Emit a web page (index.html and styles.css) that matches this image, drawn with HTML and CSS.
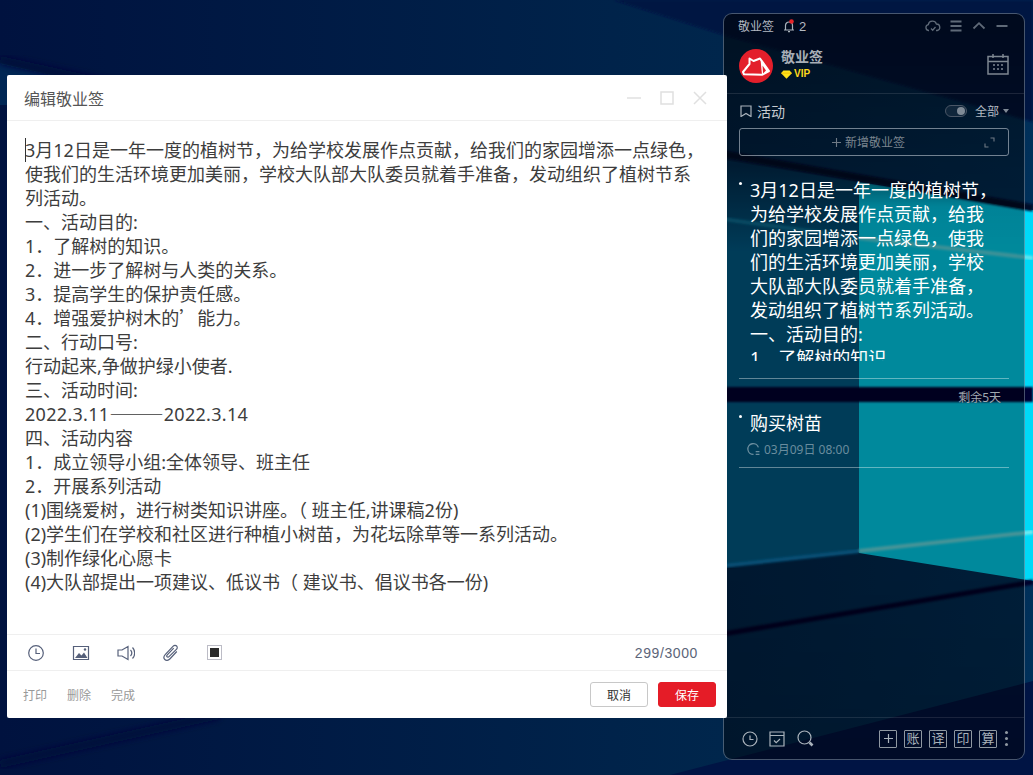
FILE: index.html
```html
<!DOCTYPE html>
<html lang="zh-CN">
<head>
<meta charset="utf-8">
<title>敬业签</title>
<link rel="stylesheet" href="styles.css">
</head>
<body>
<div class="desktop">
  <svg class="wallpaper" viewBox="0 0 1033 775" width="1033" height="775" aria-hidden="true">
    <defs>
      <linearGradient id="base" x1="0" y1="0" x2="1" y2="0"><stop offset="0" stop-color="#00123f"/><stop offset="0.7" stop-color="#00264c"/><stop offset="1" stop-color="#00305a"/></linearGradient>
      <linearGradient id="paneL" x1="0" y1="165" x2="0" y2="250" gradientUnits="userSpaceOnUse"><stop offset="0" stop-color="#003056"/><stop offset="1" stop-color="#005f8c"/></linearGradient>
      <linearGradient id="paneR" x1="0" y1="180" x2="0" y2="240" gradientUnits="userSpaceOnUse"><stop offset="0" stop-color="#0090b0"/><stop offset="0.45" stop-color="#00d8fa"/><stop offset="1" stop-color="#00daf8"/></linearGradient>
      <filter id="soft"><feGaussianBlur stdDeviation="1"/></filter>
      <filter id="softer"><feGaussianBlur stdDeviation="3"/></filter>
    </defs>
    <rect width="1033" height="775" fill="url(#base)"/>
    <polygon points="614,0 1033,0 1033,122 724,35" fill="#001243" filter="url(#soft)"/>
    <polygon points="0,63 180,105 0,105" fill="#002654"/>
    <path d="M0,60 L220,108" stroke="#000a3a" stroke-width="8" filter="url(#softer)"/>
    <polygon points="723,160 859,182 859,552 723,566" fill="url(#paneL)"/>
    <polygon points="859,182 1033,210 1033,581 859,553" fill="url(#paneR)"/>
    <path d="M723,154 L1033,208" stroke="#00082c" stroke-width="7" filter="url(#soft)"/>
    <path d="M723,219 L859,238" stroke="#0a78a0" stroke-width="4" filter="url(#soft)"/>
    <path d="M859,238 L1033,258" stroke="#60e6f0" stroke-width="4" filter="url(#soft)"/>
    <path d="M723,566 L859,551" stroke="#0a7cb8" stroke-width="4" filter="url(#soft)"/>
    <path d="M859,551 L1033,532" stroke="#70eaf0" stroke-width="4" filter="url(#soft)"/>
    <rect x="700" y="387" width="333" height="15" fill="#000030" filter="url(#soft)"/>
    <path d="M1033,582 L723,634" stroke="#00002c" stroke-width="5" filter="url(#soft)"/>
    <polygon points="1033,681 1033,775 670,775" fill="#001444"/>
    <path d="M0,764 L219,715" stroke="#000a3a" stroke-width="8" filter="url(#softer)"/>
  </svg>

  <aside class="panel">
    <div class="titlebar">
      <div class="titlebar-left">
        <span class="app-name">敬业签</span>
        <svg class="ic-bell" viewBox="0 0 14 14"><path class="s-light" d="M2 11h10M3.500 11V6.500a3.500 3.500 0 0 1 7 0V11M6 12.600h2"/><circle cx="9.500" cy="2.500" r="2.300" fill="#e5252a"/></svg>
        <span class="bell-count">2</span>
      </div>
      <div class="titlebar-right">
        <svg class="ic-win" viewBox="0 0 16 12"><path class="s-dim" d="M4 10.500H3.500A3 3 0 0 1 3.300 4.600 4.200 4.200 0 0 1 11.400 4a3.300 3.300 0 0 1 .9 6.500H11M6 8.500l1.700 1.700L10.500 7"/></svg>
        <svg class="ic-win" viewBox="0 0 16 12"><path class="s-dim w2" d="M2.500 1.500h11M2.500 6h11M2.500 10.500h11"/></svg>
        <svg class="ic-win" viewBox="0 0 16 12"><path class="s-dim w2" d="M2.500 8.500L8 3.200l5.500 5.300"/></svg>
        <svg class="ic-win" viewBox="0 0 16 12"><path class="s-dim w2" d="M2.500 6h11"/></svg>
      </div>
    </div>

    <div class="profile">
      <svg class="avatar" viewBox="0 0 34 34">
        <circle cx="17" cy="17" r="17" fill="#e31f2b"/>
        <path d="M4 23L10.500 15V9.500l4 2.500 6.500-2.500L30 22l-7 3.800L5 25.300z" fill="none" stroke="#fff" stroke-width="2" stroke-linejoin="round"/>
        <path d="M21.500 10L30 22l-7 3.800-.6-6z" fill="#fff"/>
        <path d="M23.500 16.500L27 21.500 24 24.500z" fill="#e31f2b"/>
      </svg>
      <div class="profile-info">
        <div class="profile-name">敬业签</div>
        <div class="vip">
          <svg class="ic-gem" viewBox="0 0 12 10"><path d="M2.500 0.500h7L12 3.500 6 9.800 0 3.500z" fill="#ffe21a"/><path d="M0 3.500h12" stroke="#f0b400" stroke-width=".8"/></svg>
          <span>VIP</span>
        </div>
      </div>
      <svg class="ic-cal" viewBox="0 0 22 22">
        <path class="s-cal" d="M1 3.500h20v17.500H1zM1 8.500h20M6 1v4M16 1v4"/>
        <path class="s-cal" d="M6 12h2M10 12h2M14 12h2M6 16h2M10 16h2M14 16h2"/>
      </svg>
    </div>

    <div class="filter">
      <svg class="ic-mark" viewBox="0 0 12 12"><path class="s-light" d="M1 1h10v10.500L6 8.500 1 11.500z"/></svg>
      <span class="filter-name">活动</span>
      <span class="toggle"><span class="toggle-knob"></span></span>
      <span class="filter-all">全部</span>
      <span class="caret"></span>
    </div>

    <div class="add-note">
      <svg class="ic-plus" viewBox="0 0 9 9"><path class="s-faint" d="M4.500 0v9M0 4.500h9"/></svg>
      <span>新增敬业签</span>
      <svg class="ic-expand" viewBox="0 0 11 11"><path class="s-faint" d="M6.500 1H10v3.500M4.500 10H1V6.500"/></svg>
    </div>

    <div class="notes">
      <article class="note note-long">
        <div class="note-text clipped">3月12日是一年一度的植树节，<br>为给学校发展作点贡献，给我<br>们的家园增添一点绿色，使我<br>们的生活环境更加美丽，学校<br>大队部大队委员就着手准备，<br>发动组织了植树节系列活动。<br>一、活动目的:<br>1．了解树的知识。</div>
      </article>
      <div class="remain">剩余5天</div>
      <article class="note">
        <div class="note-text">购买树苗</div>
        <div class="note-meta">
          <svg class="ic-repeat" viewBox="0 0 13 13"><path class="s-meta" d="M11.500 5A5 5 0 1 0 7 11.500M9 9h3.500M9 11.500h3.500"/></svg>
          <span>03月09日 08:00</span>
        </div>
      </article>
    </div>

    <div class="panel-foot">
      <div class="foot-left">
        <svg class="ic-foot" viewBox="0 0 16 16"><circle class="s-light" cx="8" cy="8" r="7"/><path class="s-light" d="M8 4.500V8.500h3.500"/></svg>
        <svg class="ic-foot" viewBox="0 0 16 16"><path class="s-light" d="M1 1h14v14H1zM1 4.500h14M5 9.500l2.200 2.200L11 8"/></svg>
        <svg class="ic-foot ic-search" viewBox="0 0 17 17"><circle class="s-light" cx="7.500" cy="7.500" r="6.500"/><path class="s-thick" d="M12.500 12.500l3 3"/></svg>
      </div>
      <div class="foot-right">
        <span class="tool-box"><svg class="ic-boxplus" viewBox="0 0 9 9"><path class="s-light" d="M4.500 0v9M0 4.500h9"/></svg></span>
        <span class="tool-box">账</span>
        <span class="tool-box">译</span>
        <span class="tool-box">印</span>
        <span class="tool-box">算</span>
        <span class="dots"><i></i><i></i><i></i></span>
      </div>
    </div>
  </aside>

  <main class="editor-window">
    <header class="win-head">
      <h1 class="win-title">编辑敬业签</h1>
      <div class="win-controls">
        <svg class="ic-ctrl" viewBox="0 0 14 14"><path class="s-ctrl" d="M0 7h14"/></svg>
        <svg class="ic-ctrl" viewBox="0 0 14 14"><path class="s-ctrl" d="M1 1h12v12H1z"/></svg>
        <svg class="ic-ctrl" viewBox="0 0 14 14"><path class="s-ctrl" d="M1 1l12 12M13 1L1 13"/></svg>
      </div>
    </header>

    <div class="editor">
      <span class="caret-line"></span>
      3月12日是一年一度的植树节，为给学校发展作点贡献，给我们的家园增添一点绿色，<br>
      使我们的生活环境更加美丽，学校大队部大队委员就着手准备，发动组织了植树节系<br>
      列活动。<br>
      一、活动目的:<br>
      1．了解树的知识。<br>
      2．进一步了解树与人类的关系。<br>
      3．提高学生的保护责任感。<br>
      4．增强爱护树木的<span class="cjk">’</span>能力。<br>
      二、行动口号:<br>
      行动起来,争做护绿小使者.<br>
      三、活动时间:<br>
      <span class="date-range">2022.3.11<span class="cjk">———</span>2022.3.14</span><br>
      四、活动内容<br>
      1．成立领导小组:全体领导、班主任<br>
      2．开展系列活动<br>
      (1)围绕爱树，进行树类知识讲座。（ 班主任,讲课稿2份)<br>
      (2)学生们在学校和社区进行种植小树苗，为花坛除草等一系列活动。<br>
      (3)制作绿化心愿卡<br>
      (4)大队部提出一项建议、低议书（ 建议书、倡议书各一份)
    </div>

    <div class="toolbar">
      <svg class="ic-tool" viewBox="0 0 18 18"><circle class="s-tool" cx="9" cy="9" r="7.300"/><path class="s-tool" d="M9 4.500V9.500h4"/></svg>
      <svg class="ic-tool" viewBox="0 0 18 18"><path class="s-tool" d="M1.500 2.500h15v13h-15z"/><path d="M3 14l4-5 2.500 2.500L12 8.500l3.500 5.500z" fill="#56607a"/><circle cx="13" cy="5.500" r="1.200" fill="#56607a"/></svg>
      <svg class="ic-tool" viewBox="0 0 18 18"><path class="s-tool" d="M1 6h4l6-3.500v13L5 12H1zM13.500 6a4.500 4.500 0 0 1 0 6M15.500 3.500a8 8 0 0 1 0 11"/></svg>
      <svg class="ic-tool" viewBox="0 0 18 18"><path class="s-tool" d="M14.800 7.500l-7 7.500c-1.500 1.600-3.800 1.700-5 .5s-1-3.300.4-4.800l8-8.500c1-1 2.500-1.100 3.400-.2s.8 2.400-.2 3.400L7 12.600c-.6.600-1.400.7-1.900.2s-.4-1.300.2-1.900l6.400-6.800"/></svg>
      <span class="color-swatch"><span class="color-fill"></span></span>
      <span class="counter">299/3000</span>
    </div>

    <footer class="win-foot">
      <div class="foot-links">
        <span>打印</span>
        <span>删除</span>
        <span>完成</span>
      </div>
      <div class="foot-buttons">
        <button class="btn btn-cancel" type="button">取消</button>
        <button class="btn btn-save" type="button">保存</button>
      </div>
    </footer>
  </main>
</div>
</body>
</html>
```

FILE: styles.css
```css
* { box-sizing: border-box; }
html, body { margin: 0; padding: 0; height: 100%; overflow: hidden; }
body { font-family: "Noto Sans", "Noto Sans CJK SC", "Liberation Sans", sans-serif; }

.desktop { position: relative; width: 1033px; height: 775px; overflow: hidden; background: #001a44; }
.wallpaper { position: absolute; left: 0; top: 0; display: block; }

/* shared strokes */
.s-light { fill: none; stroke: #a9b2bb; stroke-width: 1.2; }
.s-dim { fill: none; stroke: #5f6a78; stroke-width: 1.3; }
.s-dim.w2 { stroke-width: 1.8; }
.s-faint { fill: none; stroke: #6f7a85; stroke-width: 1.1; }
.s-cal { fill: none; stroke: #7d8791; stroke-width: 1.500; }
.s-meta { fill: none; stroke: #6a8d9e; stroke-width: 1.2; }
.s-thick { fill: none; stroke: #a9b2bb; stroke-width: 2.600; }
.s-ctrl { fill: none; stroke: #e0e0e0; stroke-width: 1.500; }
.s-tool { fill: none; stroke: #56607a; stroke-width: 1.2; }

/* right panel */
.panel {
  position: absolute; left: 723px; top: 13px; width: 302px; height: 747px;
  display: flex; flex-direction: column;
  border: 1px solid rgba(170, 190, 215, .42); border-radius: 9px; overflow: hidden;
  background: linear-gradient(180deg, rgba(0,0,0,.55) 0, rgba(0,0,0,.42) 150px, rgba(0,0,0,.37) 240px, rgba(0,0,0,.37) 560px, rgba(0,0,0,.42) 100%);
  color: #fff;
}
.titlebar { height: 24px; flex: none; display: flex; align-items: center; justify-content: space-between; padding: 0 14px 0 14px; }
.titlebar-left { display: flex; align-items: center; }
.app-name { font-size: 12px; color: #b4bac2; width: 36px; white-space: nowrap; }
.ic-bell { width: 14px; height: 14px; margin-left: 8px; }
.bell-count { font-size: 13px; color: #b4bac2; margin-left: 3px; font-family: "Liberation Sans", sans-serif; }
.titlebar-right { display: flex; align-items: center; gap: 7px; }
.ic-win { width: 16px; height: 12px; display: block; }

.profile { height: 56px; flex: none; display: flex; align-items: center; padding: 0 14px 0 15px; border-bottom: 1px solid rgba(255,255,255,.11); }
.avatar { width: 34px; height: 34px; flex: none; }
.profile-info { margin-left: 8px; flex: 1; padding-bottom: 3px; }
.profile-name { font-size: 14px; line-height: 20px; font-weight: 700; color: #a7aeb6; }
.vip { display: flex; align-items: center; gap: 2px; height: 14px; }
.vip span { font-family: "Liberation Sans", sans-serif; font-size: 10px; font-weight: 700; color: #ffd91c; line-height: 14px; }
.ic-gem { width: 11px; height: 9px; }
.ic-cal { width: 22px; height: 22px; flex: none; margin-right: 1px; margin-bottom: 3px; }

.filter { height: 34px; flex: none; display: flex; align-items: center; padding: 0 15px 0 16px; }
.ic-mark { width: 12px; height: 12px; flex: none; }
.filter-name { font-size: 14px; color: #c6cbd0; margin-left: 5px; flex: 1; }
.toggle { width: 22px; height: 12px; border: 1px solid #4a5666; border-radius: 6px; display: flex; align-items: center; justify-content: flex-end; padding-right: 1px; background: rgba(40,60,80,.4); }
.toggle-knob { width: 8px; height: 8px; border-radius: 50%; background: #7f8a96; }
.filter-all { font-size: 12px; color: #b4bac2; margin-left: 8px; }
.caret { width: 0; height: 0; border-left: 3.500px solid transparent; border-right: 3.500px solid transparent; border-top: 4px solid #7f8a96; margin-left: 4px; }

.add-note {
  position: relative; flex: none; height: 28px; margin: 0 15px; padding-right: 11px; display: flex; align-items: center; justify-content: center; gap: 4px;
  border: 1px solid rgba(190, 200, 210, .6); border-radius: 3px; font-size: 12px; color: #7b858f;
}
.ic-plus { width: 9px; height: 9px; }
.ic-expand { position: absolute; right: 13px; top: 8px; width: 11px; height: 11px; }

.notes { flex: 1; min-height: 0; padding: 0 15px; display: flex; flex-direction: column; }
.note { border-bottom: 1px solid rgba(255,255,255,.38); position: relative; padding: 0 0 10px 11px; }
.note::before { content: ""; position: absolute; left: 0; top: 4px; width: 3px; height: 3px; border-radius: 50%; background: #fff; }
.note-long { margin-top: 22px; padding-bottom: 17px; }
.note-text { font-size: 18px; line-height: 24px; color: #fff; white-space: nowrap; }
.clipped { height: 183px; overflow: hidden; }
.remain { text-align: right; font-size: 12px; line-height: 14px; color: #a0a8b0; margin: 12px 8px 6px 0; }
.note-meta { display: flex; align-items: center; gap: 4px; margin-top: 6px; height: 16px; font-size: 12px; color: #6a8d9e; }
.ic-repeat { width: 14px; height: 14px; margin-left: -4px; }

.panel-foot { height: 42px; flex: none; border-top: 1px solid rgba(255,255,255,.1); display: flex; align-items: center; justify-content: space-between; padding: 0 14px 0 18px; }
.foot-left { display: flex; align-items: center; gap: 11px; }
.ic-foot { width: 16px; height: 16px; display: block; }
.ic-search { width: 17px; height: 17px; margin-left: 1px; }
.foot-right { display: flex; align-items: center; gap: 7px; }
.tool-box { width: 18px; height: 18px; border: 1px solid #8f98a2; border-radius: 1px; display: flex; align-items: center; justify-content: center; font-size: 13px; line-height: 1; color: #a9b2bb; }
.ic-boxplus { width: 9px; height: 9px; }
.dots { display: flex; flex-direction: column; gap: 3px; margin-left: 1px; width: 5px; }
.dots i { display: block; width: 3px; height: 3px; border-radius: 50%; background: #8f98a2; }

/* editor window */
.editor-window { position: absolute; left: 7px; top: 75px; width: 720px; height: 643px; background: #fff; border-radius: 2px; display: flex; flex-direction: column; }
.win-head { height: 46px; flex: none; display: flex; align-items: center; justify-content: space-between; padding: 0 20px 0 17px; border-bottom: 1px solid #efefef; }
.win-title { margin: 0; font-size: 16px; font-weight: 400; color: #555; }
.win-controls { display: flex; align-items: center; gap: 19px; }
.ic-ctrl { width: 14px; height: 14px; display: block; }

.editor { position: relative; flex: 1 1 0; min-height: 0; padding: 17px 0 0 18px; font-size: 18px; line-height: 24px; color: #3d3d3d; white-space: nowrap; }
.caret-line { position: absolute; left: 18px; top: 17px; width: 1px; height: 24px; background: #333; }
.cjk { font-family: "Noto Sans CJK SC", sans-serif; line-height: 0; }
.date-range { letter-spacing: .3px; }

.toolbar { height: 37px; flex: none; display: flex; align-items: center; gap: 27px; padding: 0 29px 0 20px; border-top: 1px solid #efefef; border-bottom: 1px solid #efefef; }
.ic-tool { width: 18px; height: 18px; flex: none; }
.color-swatch { width: 15px; height: 15px; border: 1px solid #bcbcc6; display: flex; align-items: center; justify-content: center; }
.color-fill { width: 9px; height: 9px; background: #2b2b2b; }
.counter { margin-left: auto; font-family: "Liberation Sans", sans-serif; font-size: 14px; letter-spacing: .6px; color: #5c6579; }

.win-foot { flex: none; height: 47px; display: flex; align-items: center; justify-content: space-between; padding: 0 11px 0 16px; }
.foot-links { display: flex; gap: 20px; font-size: 12px; color: #999; }
.foot-buttons { display: flex; gap: 10px; }
.btn { width: 58px; height: 25px; padding: 0; font-family: inherit; font-size: 12px; border-radius: 3px; cursor: pointer; }
.btn-cancel { background: #fff; border: 1px solid #c8c8c8; color: #333; }
.btn-save { background: #e51c27; border: 1px solid #e51c27; color: #fff; }
```
